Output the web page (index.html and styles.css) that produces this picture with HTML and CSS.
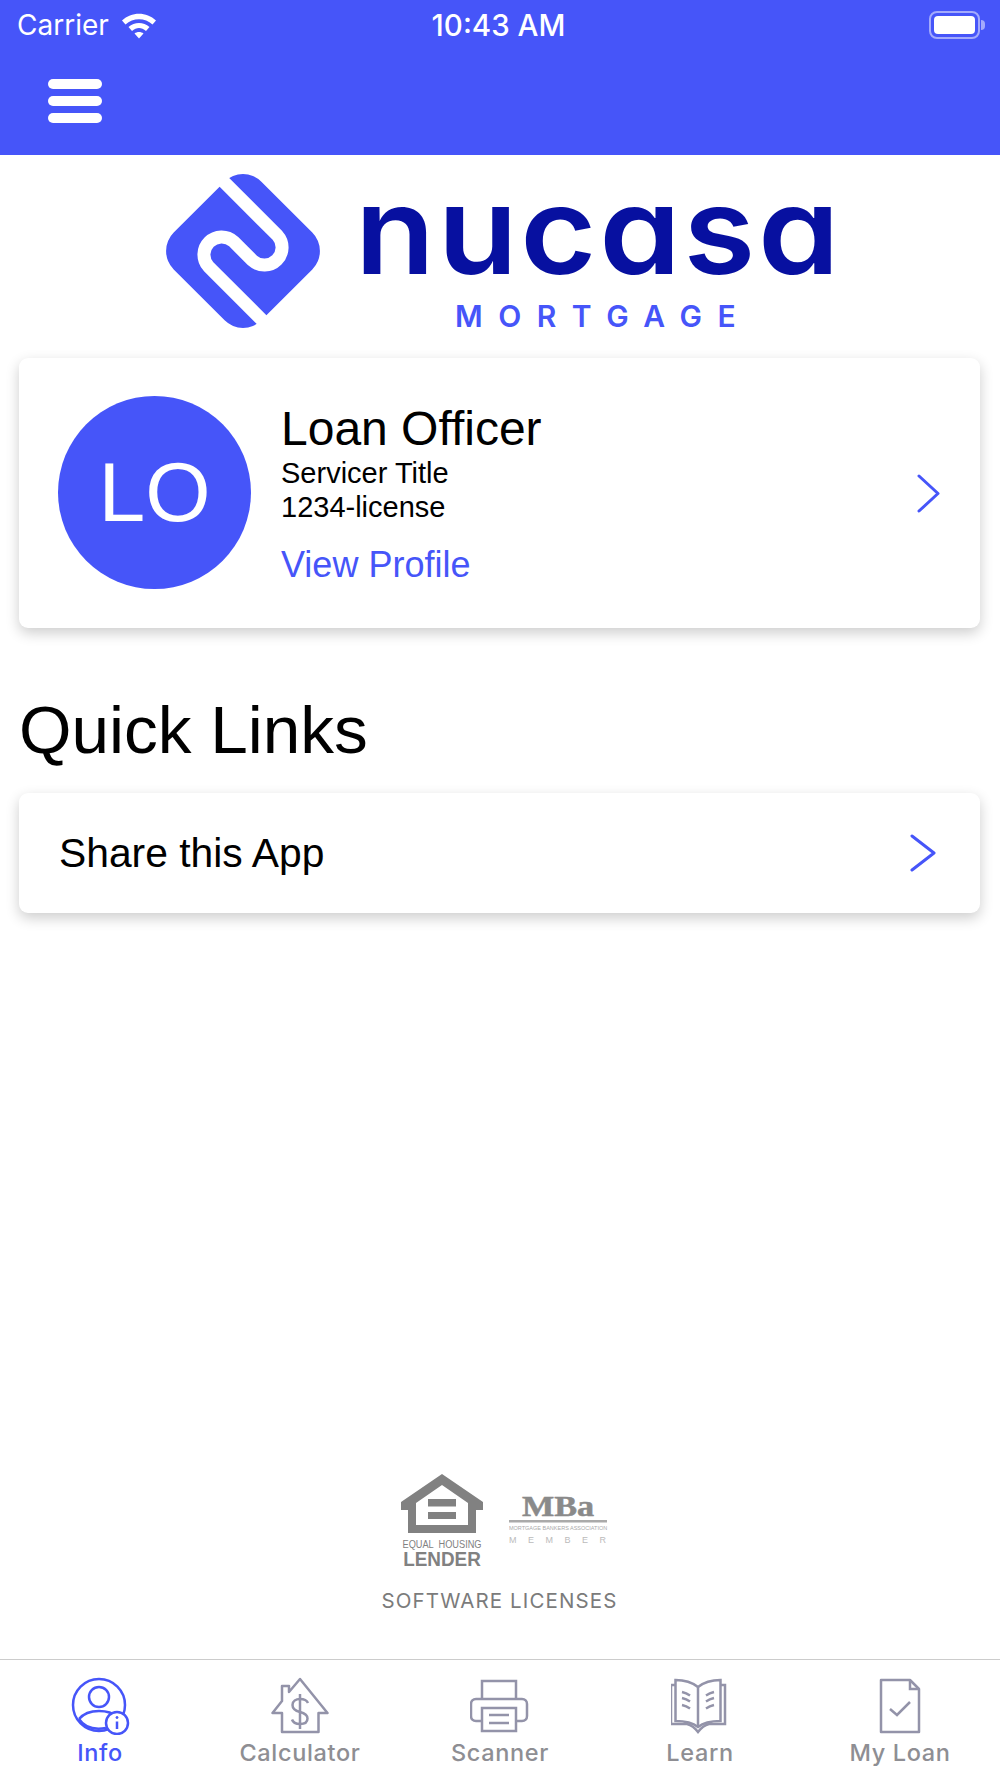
FILE: index.html
```html
<!DOCTYPE html>
<html lang="en">
<head>
    <meta charset="UTF-8">
    <meta name="viewport" content="width=device-width, initial-scale=1.0">
    <title>Nucasa Mortgage</title>
    <link rel="stylesheet" href="styles.css">
</head>
<body>

<div class="app">

    <!-- Status bar and menu -->
    <header class="topbar">
        <div class="status-bar">
            <div class="status-left">
                <span class="carrier">Carrier</span>
                <svg class="wifi" width="36" height="28" viewBox="0 0 36 28">
                    <path d="M1 9.5C10.5 0.5 25.5 0.5 35 9.5L31.5 13.5C24 6.5 12 6.5 4.5 13.5Z" fill="#fff"/>
                    <path d="M7.5 16C13.5 10.5 22.5 10.5 28.5 16L25 20C20.5 16 15.5 16 11 20Z" fill="#fff"/>
                    <path d="M13.5 22.5C16 20.5 20 20.5 22.5 22.5L18 27.5Z" fill="#fff"/>
                </svg>
            </div>
            <span class="clock">10:43 AM</span>
            <div class="battery"><span class="battery-fill"></span></div>
        </div>
        <button class="menu-button" aria-label="Menu"><span></span><span></span><span></span></button>
    </header>

    <main class="content">
        <!-- Logo -->
        <div class="logo">
            <svg class="logo-mark" width="154" height="154" viewBox="0 0 154 154">
                <rect x="15" y="15" width="124" height="124" rx="26" transform="rotate(45 77 77)" fill="#4655F9"/>
                <path d="M50 0L111.5 61.5A17.7 17.7 0 0 1 86.5 86.5L67.5 67.5A17.7 17.7 0 0 0 42.5 92.5L104 154" fill="none" stroke="#fff" stroke-width="13"/>
            </svg>
            <div class="logo-words">
                <span class="logo-name">nucasa</span>
                <span class="logo-sub">MORTGAGE</span>
            </div>
        </div>

        <!-- Loan officer card -->
        <section class="card officer-card">
            <div class="avatar">LO</div>
            <div class="officer-info">
                <div class="officer-name">Loan Officer</div>
                <div class="officer-line">Servicer Title</div>
                <div class="officer-line">1234-license</div>
                <a class="officer-link" href="#">View Profile</a>
            </div>
            <svg class="chevron" width="24" height="39" viewBox="0 0 24 39">
                <path d="M2 2L21 19.5L2 37" fill="none" stroke="#4655F9" stroke-width="3" stroke-linecap="round" stroke-linejoin="round"/>
            </svg>
        </section>

        <h2 class="section-title">Quick Links</h2>

        <section class="card share-card">
            <span class="share-label">Share this App</span>
            <svg class="chevron-large" width="27" height="38" viewBox="0 0 27 38">
                <path d="M2 2L24 19L2 36" fill="none" stroke="#4655F9" stroke-width="3" stroke-linecap="round" stroke-linejoin="round"/>
            </svg>
        </section>

        <!-- Footer badges -->
        <div class="badges">
            <div class="badge-row">
                <svg class="badge-ehl" width="84" height="96" viewBox="0 0 84 96">
                    <path fill-rule="evenodd" d="M42 0L83 28V36H76V59H8V36H1V28ZM42 11L16 29V51H68V29Z" fill="#818181"/>
                    <rect x="28" y="25" width="28" height="7.5" fill="#818181"/>
                    <rect x="28" y="38" width="28" height="7" fill="#818181"/>
                    <text transform="translate(42 74) scale(0.84 1)" text-anchor="middle" class="ehl-small">EQUAL HOUSING</text>
                    <text transform="translate(42 92) scale(0.9 1)" text-anchor="middle" class="ehl-large">LENDER</text>
                </svg>
                <svg class="badge-mba" width="110" height="58" viewBox="0 -8 110 58">
                    <text transform="translate(49 20) scale(1.18 1)" text-anchor="middle" class="mba-mark">MBa</text>
                    <rect x="0" y="24" width="98" height="2.5" fill="#aaa"/>
                    <text x="0" y="34" class="mba-small">MORTGAGE BANKERS ASSOCIATION</text>
                    <text x="0" y="47" class="mba-member">MEMBER</text>
                </svg>
            </div>
            <a class="licenses" href="#">SOFTWARE LICENSES</a>
        </div>
    </main>

    <!-- Tab bar -->
    <nav class="tabbar">
        <a class="tab tab-active" href="#">
            <svg width="60" height="58" viewBox="0 0 60 58" fill="none" stroke="#4655F9" stroke-width="2.5">
                <circle cx="29" cy="28" r="26"/>
                <circle cx="29" cy="20" r="10"/>
                <path d="M9 42C14 36 22 34 29 34C36 34 42 35 47 40"/>
                <path d="M9 42C14 50 24 53 36 51"/>
                <circle cx="47" cy="46" r="11" fill="#fff"/>
                <path d="M47 44.5V52"/>
                <circle cx="47" cy="40.5" r="1" fill="#4655F9" stroke-width="1"/>
            </svg>
            <span>Info</span>
        </a>
        <a class="tab" href="#">
            <svg width="58" height="58" viewBox="0 0 58 58" fill="none" stroke="#9393A9" stroke-width="2.5">
                <path d="M11 55V36H1.5L11 24V9H18V15L29 2L56.5 36H47.5V55Z" stroke-linejoin="round"/>
                <path d="M37 26C35.5 22.5 32.5 22 29 22C25 22 21.5 24 21.5 28C21.5 32 25 34 29 35C33 36 36.5 37.5 36.5 41.5C36.5 45.5 33 47 29 47C25 47 22 45.5 21 42.5"/>
                <path d="M29 17V52"/>
            </svg>
            <span>Calculator</span>
        </a>
        <a class="tab" href="#">
            <svg width="60" height="58" viewBox="1 0 60 58" fill="none" stroke="#9393A9" stroke-width="2.5">
                <path d="M13 22V4H47V22"/>
                <path d="M13 44H7C4 44 2 42 2 39V27C2 24 4 22 7 22H53C56 22 58 24 58 27V39C58 42 56 44 53 44H47"/>
                <rect x="13" y="31" width="34" height="23"/>
                <path d="M20 38H40M20 46H40"/>
            </svg>
            <span>Scanner</span>
        </a>
        <a class="tab" href="#">
            <svg width="58" height="58" viewBox="2 0 58 58" fill="none" stroke="#9393A9" stroke-width="2.5">
                <path d="M29 10C24 6 16 3 6.5 3V44C16 44 24 46 29 50C34 46 42 44 51.5 44V3C42 3 34 6 29 10Z"/>
                <path d="M29 10V50"/>
                <path d="M6.5 8H2V47H18C22 48 26 51 29 55C32 51 36 48 40 47H56V8H51.5"/>
                <path d="M13 15C15 15.5 18 16.500 21 18.500M13 21C15 21.500 18 22.500 21 24.500M13 28C15 28.500 18 29.500 21 31.500M37 18.500C40 16.500 43 15.500 45 15M37 24.500C40 22.500 43 21.500 45 21M37 31.500C40 29.500 43 28.500 45 28"/>
            </svg>
            <span>Learn</span>
        </a>
        <a class="tab" href="#">
            <svg width="42" height="58" viewBox="0 0 42 58" fill="none" stroke="#9393A9" stroke-width="2.5">
                <path d="M2 3H31L40 12V55H2Z" stroke-linejoin="round"/>
                <path d="M31 3V12H40"/>
                <path d="M11 32L18 38L31 25"/>
            </svg>
            <span>My Loan</span>
        </a>
    </nav>

</div>

</body>
</html>
```

FILE: styles.css
```css
body {
    margin: 0;
    font-family: "Liberation Sans", Arial, sans-serif;
    background-color: white;
    color: black;
}
a {
    text-decoration: none;
}
.app {
    display: flex;
    flex-direction: column;
    height: 100vh;
    overflow: hidden;
}

/* Top bar */
.topbar {
    height: 155px;
    flex-shrink: 0;
    background-color: #4655F9;
    color: white;
}
.status-bar {
    display: grid;
    grid-template-columns: 1fr auto 1fr;
    align-items: center;
    height: 50px;
    padding: 0 20px 0 17px;
    font-family: Inter, sans-serif;
}
.status-left {
    display: flex;
    align-items: center;
    gap: 12px;
}
.carrier {
    font-size: 28px;
}
.clock {
    font-size: 29.5px;
    font-weight: 500;
}
.battery {
    justify-self: end;
    position: relative;
    box-sizing: border-box;
    width: 51px;
    height: 28px;
    padding: 3px;
    border: 2px solid rgba(255, 255, 255, 0.5);
    border-radius: 8px;
}
.battery::after {
    content: "";
    position: absolute;
    right: -7px;
    top: 7px;
    width: 4px;
    height: 10px;
    border-radius: 0 4px 4px 0;
    background-color: rgba(255, 255, 255, 0.5);
}
.battery-fill {
    display: block;
    height: 100%;
    background-color: white;
    border-radius: 4px;
}
.menu-button {
    display: flex;
    flex-direction: column;
    gap: 7px;
    width: 54px;
    margin: 29px 0 0 48px;
    padding: 0;
    border: none;
    background: none;
}
.menu-button span {
    height: 10px;
    background-color: white;
    border-radius: 5px;
}

/* Main content */
.content {
    flex: 1;
    display: flex;
    flex-direction: column;
    padding: 0 20px 0 19px;
}
.logo {
    display: flex;
    gap: 35px;
    padding: 19px 0 0 147px;
    height: 184px;
    box-sizing: border-box;
}
.logo-mark {
    flex-shrink: 0;
}
.logo-words {
    display: flex;
    flex-direction: column;
    align-items: flex-start;
    font-family: Inter, sans-serif;
}
.logo-name {
    margin-top: 6px;
    font-size: 122px;
    line-height: 100px;
    font-weight: 600;
    letter-spacing: 2.6px;
    color: #0710A0;
    font-feature-settings: "cv11";
    transform: scaleX(1.07);
    transform-origin: left;
}
.logo-sub {
    margin: 21px 0 0 100px;
    font-size: 30px;
    line-height: 30px;
    font-weight: 600;
    letter-spacing: 15.5px;
    color: #4655F9;
}
.card {
    display: flex;
    align-items: center;
    background-color: white;
    border-radius: 9px;
    box-shadow: 0 5px 14px rgba(0, 0, 0, 0.2);
}
.officer-card {
    height: 270px;
    margin-top: 19px;
    padding: 0 39px 0 39px;
}
.avatar {
    flex-shrink: 0;
    display: flex;
    align-items: center;
    justify-content: center;
    width: 193px;
    height: 193px;
    margin-bottom: 2px;
    border-radius: 50%;
    background-color: #4655F9;
    color: white;
    font-size: 84px;
}
.officer-info {
    flex: 1;
    display: flex;
    flex-direction: column;
    margin-left: 30px;
    padding-top: 2px;
}
.officer-name {
    font-size: 48px;
    line-height: 54px;
}
.officer-line {
    font-size: 29px;
    line-height: 34px;
}
.officer-link {
    margin-top: 20px;
    font-size: 36px;
    line-height: 42px;
    color: #4655F9;
}
.section-title {
    margin: 65px 0 0;
    font-size: 67.5px;
    line-height: 74px;
    font-weight: normal;
}
.share-card {
    justify-content: space-between;
    height: 120px;
    margin-top: 26px;
    padding: 0 43px 0 40px;
}
.share-label {
    font-size: 40.8px;
}

/* Badges at the foot of the page */
.badges {
    margin-top: auto;
    display: flex;
    flex-direction: column;
    align-items: center;
    padding-bottom: 46px;
}
.badge-row {
    display: flex;
    align-items: flex-start;
    gap: 25px;
    padding-left: 20px;
}
.badge-mba {
    margin-top: 14px;
}
.ehl-small {
    font-family: "Liberation Sans", sans-serif;
    font-size: 11px;
    word-spacing: 3px;
    fill: #818181;
}
.ehl-large {
    font-family: "Liberation Sans", sans-serif;
    font-size: 21px;
    font-weight: bold;
    fill: #818181;
}
.mba-mark {
    font-family: "Liberation Serif", serif;
    font-size: 29px;
    font-weight: bold;
    fill: #8a8a8a;
    stroke: #8a8a8a;
    stroke-width: 0.5px;
}
.mba-small {
    font-family: "Liberation Sans", sans-serif;
    font-size: 5.5px;
    fill: #aaa;
}
.mba-member {
    font-family: "Liberation Sans", sans-serif;
    font-size: 9px;
    letter-spacing: 11.5px;
    fill: #bbb;
}
.licenses {
    margin-top: 19px;
    font-family: Inter, sans-serif;
    font-size: 20.5px;
    line-height: 24px;
    letter-spacing: 1.1px;
    color: #7b7b7b;
}

/* Tab bar */
.tabbar {
    flex-shrink: 0;
    display: flex;
    height: 118px;
    border-top: 1px solid #ccc;
    font-family: Inter, sans-serif;
}
.tab {
    flex: 1;
    display: flex;
    flex-direction: column;
    align-items: center;
    padding-top: 17px;
    font-size: 23.5px;
    font-weight: 500;
    letter-spacing: 0.65px;
    color: #8e8e93;
}
.tab svg {
    margin-bottom: 3px;
}
.tab span {
    line-height: 30px;
}
.tab-active {
    color: #4655F9;
}
```
